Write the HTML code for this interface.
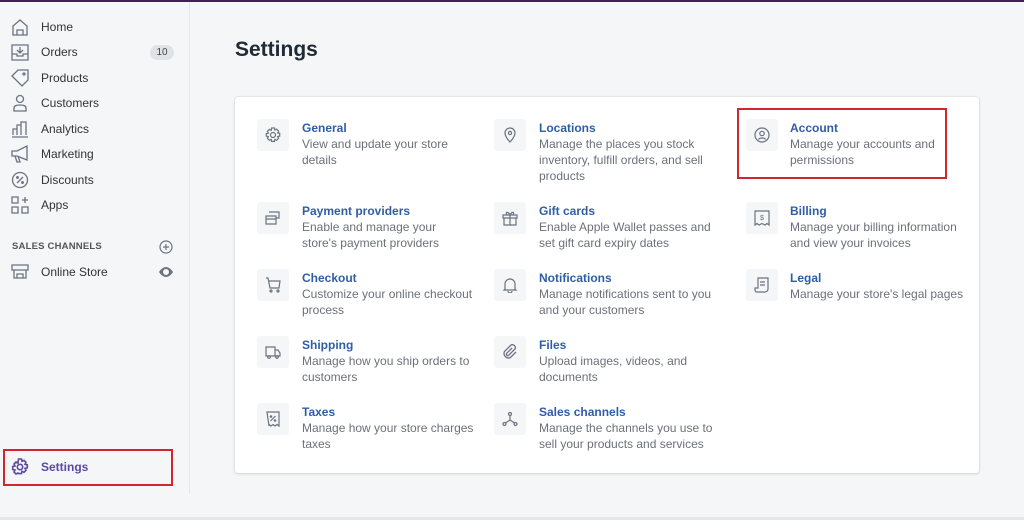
<!DOCTYPE html>
<html><head><style>
*{box-sizing:border-box;margin:0;padding:0}
body{width:1024px;height:520px;background:#f4f6f8;font-family:"Liberation Sans",sans-serif;position:relative;overflow:hidden;color:#212b36}
.top{position:absolute;left:0;top:0;width:1024px;height:2px;background:#3f1f5a}
.side{position:absolute;left:0;top:2px;width:190px;height:492px;background:#f4f6f8;border-right:1px solid #e6e8eb}
.nav{position:absolute;left:0;height:24px;width:190px;font-size:12px;color:#333;line-height:24px}
.nav svg{position:absolute;left:11px;top:3px}
.nav span{position:absolute;left:41px}
.badge{position:absolute;left:150px;top:5px;width:24px;height:15px;border-radius:8px;background:#e0e3e6;font-size:10px;line-height:15px;text-align:center;color:#444}
.sc{position:absolute;left:12px;top:241px;font-size:9.5px;color:#555;font-weight:bold;letter-spacing:.2px}
h1{position:absolute;left:235px;top:38px;font-size:21px;font-weight:bold;color:#212b36}
.card{position:absolute;left:235px;top:97px;width:744px;height:376px;background:#fff;border-radius:3px;box-shadow:0 0 0 1px rgba(63,63,68,.05),0 1px 3px rgba(63,63,68,.15)}
.it{position:absolute;font-size:12px;line-height:16px;color:#6b7079;width:168px}
.it b{display:block;font-weight:bold;color:#2f5ea5}
.ic{position:absolute;width:32px;height:32px;background:#f4f6f8;border-radius:3px}
.ic svg{position:absolute;left:8px;top:8px}
.red{position:absolute;border:2px solid #d0262e}
.bl{position:absolute;left:0;top:517px;width:1024px;height:3px;background:#e4e6e9}
</style></head><body>
<div class="top"></div>
<div class="side"></div>
<div class="nav" style="top:15px"><svg width="18" height="18" fill="none" stroke="#6b7380" stroke-width="1.3"><path d="M2 8L9 2l7 6v9H2z M6 17v-5h6v5"/></svg><span>Home</span></div>
<div class="nav" style="top:40px"><svg width="18" height="18" fill="none" stroke="#6b7380" stroke-width="1.3"><path d="M1 2h16v15H1z M1 11h5v2h6v-2h5 M9 4v6 M6 7l3 3 3-3"/></svg><span>Orders</span><div class="badge">10</div></div>
<div class="nav" style="top:66px"><svg width="18" height="18" fill="none" stroke="#6b7380" stroke-width="1.3"><path d="M1 7l6-6h10v10l-6 6z"/><circle cx="13" cy="5" r="1"/></svg><span>Products</span></div>
<div class="nav" style="top:91px"><svg width="18" height="18" fill="none" stroke="#6b7380" stroke-width="1.3"><circle cx="9" cy="5" r="3.5"/><path d="M3 17v-3c0-2 2-3 6-3s6 1 6 3v3z"/></svg><span>Customers</span></div>
<div class="nav" style="top:117px"><svg width="18" height="18" fill="none" stroke="#6b7380" stroke-width="1.3"><path d="M1 17h16 M2 15V9h4v6 M6 15V5h4v10 M10 15V2h5v13"/></svg><span>Analytics</span></div>
<div class="nav" style="top:142px"><svg width="18" height="18" fill="none" stroke="#6b7380" stroke-width="1.3"><path d="M1 6h5l10-5v14L6 11H1z M4 11l2 6h3l-2-6"/></svg><span>Marketing</span></div>
<div class="nav" style="top:168px"><svg width="18" height="18" fill="none" stroke="#6b7380" stroke-width="1.3"><circle cx="9" cy="9" r="7.5"/><path d="M6 12l6-6"/><circle cx="6.5" cy="6.5" r=".8"/><circle cx="11.5" cy="11.5" r=".8"/></svg><span>Discounts</span></div>
<div class="nav" style="top:193px"><svg width="18" height="18" fill="none" stroke="#6b7380" stroke-width="1.3"><path d="M1 1h6v6H1z M1 11h6v6H1z M11 11h6v6h-6z M14 1v6 M11 4h6"/></svg><span>Apps</span></div>
<div class="sc">SALES CHANNELS</div>
<svg style="position:absolute;left:159px;top:240px" width="14" height="14" fill="none" stroke="#6b7380" stroke-width="1.2"><circle cx="7" cy="7" r="6"/><path d="M7 4v6M4 7h6"/></svg>
<div class="nav" style="top:260px"><svg width="18" height="18" fill="none" stroke="#6b7380" stroke-width="1.3"><path d="M1 2h16v5H1z M3 7v8h12V7 M6 15v-4h6v4"/></svg><span>Online Store</span></div>
<svg style="position:absolute;left:159px;top:267px" width="14" height="10" fill="#6b7380"><path d="M7 0C3 0 0 5 0 5s3 5 7 5 7-5 7-5-3-5-7-5zm0 8a3 3 0 110-6 3 3 0 010 6z"/></svg>
<div class="nav" style="top:455px;font-weight:bold;color:#5c4a9e"><svg width="18" height="18" fill="none" stroke="#5c4a9e" stroke-width="1.6"><circle cx="9" cy="9" r="2.7"/><path d="M7.5 1h3l.5 2.3 2-1 2 2-1 2 2.3.5v3l-2.3.5 1 2-2 2-2-1-.5 2.3h-3L7 15l-2 1-2-2 1-2-2.3-.5v-3L4 8 3 6l2-2 2 1z"/></svg><span>Settings</span></div>
<div class="red" style="left:3px;top:449px;width:170px;height:37px"></div>
<h1>Settings</h1>
<div class="card"></div>

<div class="ic" style="left:257px;top:119px"><svg width="16" height="16" fill="none" stroke="#6b7380" stroke-width="1.2"><circle cx="8" cy="8" r="2.5"/><path d="M6.6 1h2.8l.4 2 1.8-.9 2 2-.9 1.8 2 .4v2.8l-2 .4.9 1.8-2 2-1.8-.9-.4 2H6.6l-.4-2-1.8.9-2-2 .9-1.8-2-.4V6.6l2-.4-.9-1.8 2-2 1.8.9z"/></svg></div>
<div class="it" style="left:302px;top:120px;width:150px"><b>General</b>View and update your store details</div>
<div class="ic" style="left:494px;top:119px"><svg width="16" height="16" fill="none" stroke="#6b7380" stroke-width="1.2"><path d="M8 15s-5-5-5-9a5 5 0 0110 0c0 4-5 9-5 9z"/><circle cx="8" cy="6" r="1.6"/></svg></div>
<div class="it" style="left:539px;top:120px;width:175px"><b>Locations</b>Manage the places you stock inventory, fulfill orders, and sell products</div>
<div class="ic" style="left:746px;top:119px"><svg width="16" height="16" fill="none" stroke="#6b7380" stroke-width="1.2"><circle cx="8" cy="8" r="7"/><circle cx="8" cy="6.5" r="2.2"/><path d="M4.5 12.5c1-2 6-2 7 0"/></svg></div>
<div class="it" style="left:790px;top:120px;width:145px"><b>Account</b>Manage your accounts and permissions</div>
<div class="red" style="left:737px;top:108px;width:210px;height:71px"></div>

<div class="ic" style="left:257px;top:202px"><svg width="16" height="16" fill="none" stroke="#6b7380" stroke-width="1.2"><path d="M4 2h10v6h-3 M1 6h10v8H1z M1 9h10"/></svg></div>
<div class="it" style="left:302px;top:203px;width:160px"><b>Payment providers</b>Enable and manage your store's payment providers</div>
<div class="ic" style="left:494px;top:202px"><svg width="16" height="16" fill="none" stroke="#6b7380" stroke-width="1.2"><path d="M1 5h14v3H1z M2 8h12v7H2z M8 5v10 M8 5C6 1 3 2 5 5 M8 5c2-4 5-3 3 0"/></svg></div>
<div class="it" style="left:539px;top:203px;width:175px"><b>Gift cards</b>Enable Apple Wallet passes and set gift card expiry dates</div>
<div class="ic" style="left:746px;top:202px"><svg width="16" height="16" fill="none" stroke="#6b7380" stroke-width="1.2"><path d="M1 1h14v14l-2-1.5L11 15l-3-1.5L5 15l-2-1.5L1 15z"/><text x="8" y="10" font-size="7" text-anchor="middle" fill="#6b7380" stroke="none">$</text></svg></div>
<div class="it" style="left:790px;top:203px;width:170px"><b>Billing</b>Manage your billing information and view your invoices</div>

<div class="ic" style="left:257px;top:269px"><svg width="16" height="16" fill="none" stroke="#6b7380" stroke-width="1.2"><path d="M1 1h2l2 10h9l1-7H4"/><circle cx="6" cy="14" r="1"/><circle cx="13" cy="14" r="1"/></svg></div>
<div class="it" style="left:302px;top:270px;width:182px"><b>Checkout</b>Customize your online checkout process</div>
<div class="ic" style="left:494px;top:269px"><svg width="16" height="16" fill="none" stroke="#6b7380" stroke-width="1.2"><path d="M3 12V7a5 5 0 0110 0v5l1 1H2z M6 14a2 2 0 004 0"/></svg></div>
<div class="it" style="left:539px;top:270px;width:175px"><b>Notifications</b>Manage notifications sent to you and your customers</div>
<div class="ic" style="left:746px;top:269px"><svg width="16" height="16" fill="none" stroke="#6b7380" stroke-width="1.2"><path d="M4 1h10v11a3 3 0 01-3 3H3a2 2 0 01-2-2v-2h3z M6 5h5 M6 8h5"/></svg></div>
<div class="it" style="left:790px;top:270px;width:185px;white-space:nowrap"><b>Legal</b>Manage your store's legal pages</div>

<div class="ic" style="left:257px;top:336px"><svg width="16" height="16" fill="none" stroke="#6b7380" stroke-width="1.2"><path d="M1 3h9v9H1z M10 6h3l2 3v3h-5"/><circle cx="4" cy="13" r="1.3"/><circle cx="12" cy="13" r="1.3"/></svg></div>
<div class="it" style="left:302px;top:337px;width:170px"><b>Shipping</b>Manage how you ship orders to customers</div>
<div class="ic" style="left:494px;top:336px"><svg width="16" height="16" fill="none" stroke="#6b7380" stroke-width="1.3"><path d="M10 4L4.5 9.5a1.5 1.5 0 002 2L13 5a3 3 0 00-4-4L2.5 7.5a4.5 4.5 0 006 6L14 8"/></svg></div>
<div class="it" style="left:539px;top:337px;width:160px"><b>Files</b>Upload images, videos, and documents</div>

<div class="ic" style="left:257px;top:403px"><svg width="16" height="16" fill="none" stroke="#6b7380" stroke-width="1.2"><path d="M2 1h12v14l-2-1.5L10 15l-2-1.5L6 15l-2-1.5L4 15z M5.5 10l5-5"/><circle cx="6" cy="5.5" r=".7"/><circle cx="10" cy="9.5" r=".7"/></svg></div>
<div class="it" style="left:302px;top:404px;width:172px"><b>Taxes</b>Manage how your store charges taxes</div>
<div class="ic" style="left:494px;top:403px"><svg width="16" height="16" fill="none" stroke="#6b7380" stroke-width="1.2"><circle cx="8" cy="3" r="1.5"/><circle cx="2.5" cy="13" r="1.5"/><circle cx="13.5" cy="13" r="1.5"/><path d="M8 4.5V9L3.5 12 M8 9l4.5 3"/></svg></div>
<div class="it" style="left:539px;top:404px;width:175px"><b>Sales channels</b>Manage the channels you use to sell your products and services</div>
<div class="bl"></div>
</body></html>
